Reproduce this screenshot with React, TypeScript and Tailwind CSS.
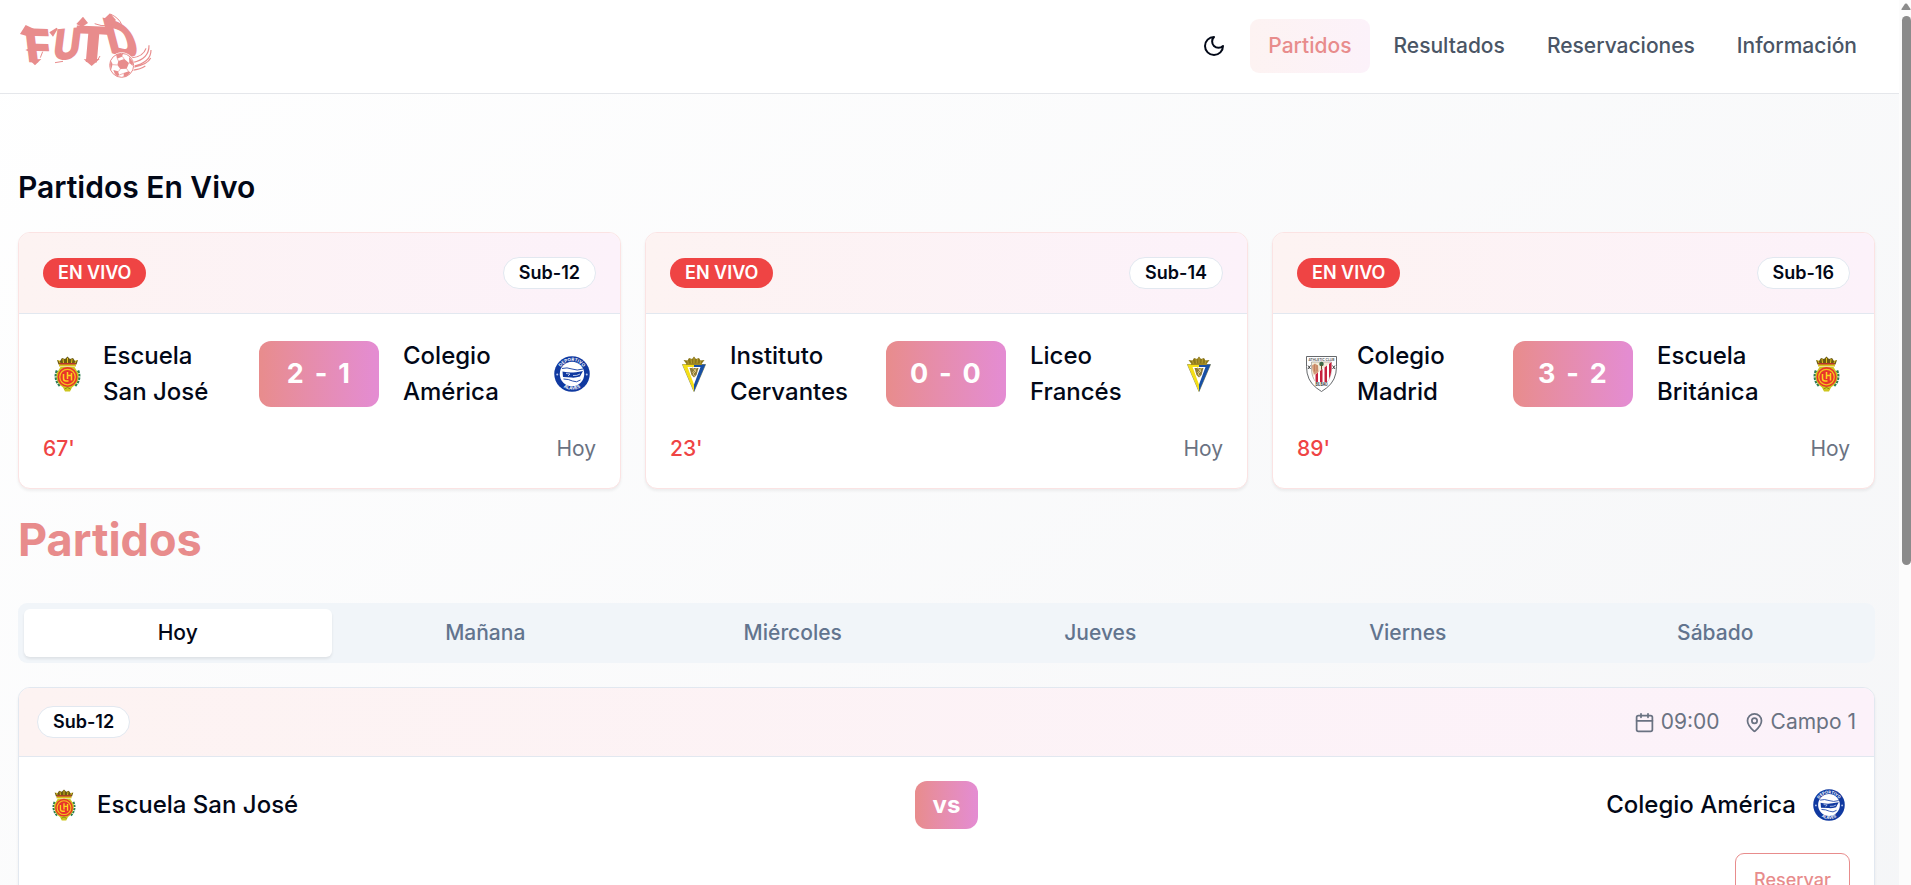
import React from "react";

type Crest = "mallorca" | "alaves" | "cadiz" | "athletic";

function MallorcaCrest({ className }: { className: string }) {
  return (
    <svg viewBox="0 0 54 72" className={className}>
      <path d="M9 17 6 8l6 2 4-6 6 2 5-5 5 5 6-2 4 6 6-2-3 9Z" fill="#6b5a12" />
      <path d="M9 8l3 6M18 6l1 8M27 4v10M36 6l-1 8M45 8l-3 6" stroke="#e0c21f" strokeWidth="2" />
      <rect x="11" y="14" width="32" height="4" fill="#b8342a" />
      <rect x="10" y="17" width="34" height="4" fill="#d8c21c" />
      <path d="M6 29q-7 17 6 31M48 29q7 17-6 31" fill="none" stroke="#2f7d54" strokeWidth="5" strokeDasharray="5 2" />
      <path d="M13 22h28l8 13q2 18-13 28l-4 8h-10l-4-8Q3 53 5 35Z" fill="#cdc61e" />
      <circle cx="27" cy="42" r="20" fill="#e8352b" />
      <circle cx="27" cy="42" r="15.5" fill="none" stroke="#f5c21b" strokeWidth="2.5" />
      <path d="M19 36v9q0 5 5 5h5M27 32v14M27 39h7M35 34v15" fill="none" stroke="#f9d51f" strokeWidth="3" />
      <path d="M21 66l6-3 6 3" fill="none" stroke="#8c8a17" strokeWidth="2" />
    </svg>
  );
}

function AlavesCrest({ className }: { className: string }) {
  return (
    <svg viewBox="0 0 72 72" className={className}>
      <defs>
        <path id="ring-top" d="M10 36a26 26 0 0 1 52 0" />
        <path id="ring-bottom" d="M4.500 36a31.500 31.500 0 0 0 63 0" />
      </defs>
      <circle cx="36" cy="36" r="35.5" fill="#1039a0" />
      <circle cx="36" cy="36" r="24.500" fill="#fff" />
      <path d="M17 31q9 2 17 2t24-3q-4 7-6 11-10 3-17 2t-17-1Z" fill="#1039a0" />
      <path d="M16 25q10-3 20 1t22 0M19 46q10 0 18 4t16-2" fill="none" stroke="#1039a0" strokeWidth="1.800" />
      <path d="M24 35l8 1-4 4M38 39q8 1 14-3" fill="none" stroke="#dfe7f8" strokeWidth="1.6" />
      <text fontSize="9" fontWeight="700" fill="#fff" className="font-['Inter',sans-serif]">
        <textPath href="#ring-top" startOffset="50%" textAnchor="middle">DEPORTIVO</textPath>
      </text>
      <text fontSize="9" fontWeight="700" fill="#fff" className="font-['Inter',sans-serif]">
        <textPath href="#ring-bottom" startOffset="50%" textAnchor="middle">ALAVÉS</textPath>
      </text>
      <circle cx="6.5" cy="37" r="2" fill="#b9c8ee" />
      <circle cx="65.5" cy="37" r="2" fill="#b9c8ee" />
    </svg>
  );
}

function CadizCrest({ className }: { className: string }) {
  return (
    <svg viewBox="0 0 48 72" className={className}>
      <path d="M9 16 3 8l8 1 3-5 6 2 4-5 4 5 6-2 3 5 8-1-6 8Z" fill="#8b7719" />
      <path d="M11 9l2 7M18 6l1 9M24 4v11M31 6l-1 9M38 9l-2 7" stroke="#c8ad38" strokeWidth="1.5" />
      <path d="M1 17h46L24 71Z" fill="#fff" stroke="#73713b" strokeWidth="1.5" />
      <path d="M1 17h23v5H11l13 35v14Z" fill="#f5df17" />
      <path d="M47 17H24v5h13L24 57v14Z" fill="#174fa4" />
      <path d="M15 24h18l-4 14-5 5-5-5Z" fill="#8d7b38" />
      <path d="M20 23l8 7-6 6 4 5M29 24l-8 10" fill="none" stroke="#d7c57e" strokeWidth="2" />
      <path d="M8 15h32v3H8Z" fill="#a28b23" />
    </svg>
  );
}

function AthleticCrest({ className }: { className: string }) {
  return (
    <svg viewBox="0 0 62 72" className={className}>
      <path d="M1 1h60v20q0 28-20 43l-10 7-10-7Q1 49 1 21Z" fill="#fff" stroke="#55585b" strokeWidth="1.8" />
      <text x="31" y="9" fontSize="8" fontWeight="600" textAnchor="middle" textLength="52" lengthAdjust="spacingAndGlyphs" fill="#55585b" className="font-['Inter',sans-serif]">ATHLETIC CLUB</text>
      <path d="M11 12h40v12q0 18-9 28H20Q11 42 11 26Z" fill="#f4edda" stroke="#7c7470" strokeWidth="1" />
      <path d="M12 19l6-4 6 4 1 14-9 4Q12 28 12 19Z" fill="#d49b78" />
      <path d="M17 17v14M22 18v12" stroke="#b87757" strokeWidth="1.5" />
      <circle cx="31" cy="16" r="4.5" fill="#3d6946" />
      <path d="M31 18v11" stroke="#6b512d" strokeWidth="2" />
      <path d="M51 12v15q-1 16-9 25H20q-4-6-5-12Z" fill="#fff" />
      <path d="M19 37l5-4v19h-4l-1-3ZM28 30l5-4v26h-5ZM37 23l5-4v33h-5ZM46 16l5-4v15q-1 11-5 19Z" fill="#c6203d" />
      <path d="M4 19l5 7M9 19l-5 7M53 19l5 7M58 19l-5 7" stroke="#333" strokeWidth="1.8" />
      <path d="M17 52h28l-6 8-8 6-8-6Z" fill="#fff" />
      <text x="31" y="60" fontSize="9" fontWeight="700" textAnchor="middle" textLength="24" lengthAdjust="spacingAndGlyphs" fill="#333" className="font-['Inter',sans-serif]">BILBAO</text>
    </svg>
  );
}

function TeamCrest({ crest, className }: { crest: Crest; className: string }) {
  if (crest === "mallorca") return <MallorcaCrest className={className} />;
  if (crest === "alaves") return <AlavesCrest className={className} />;
  if (crest === "cadiz") return <CadizCrest className={className} />;
  return <AthleticCrest className={className} />;
}

function Logo() {
  return (
    <svg viewBox="54 30 405 216" className="h-[72px] w-[135px] overflow-visible" fill="#e88c8c" aria-label="FUTD">
      <g className="font-['Inter',sans-serif]" fontWeight="900">
        <text fontSize="130" transform="matrix(1.02 .03 .13 1.08 82 187)">F</text>
        <text fontSize="118" transform="matrix(.96 -.08 -.14 1.1 155 182)">U</text>
        <text fontSize="130" transform="matrix(1.28 .06 -.1 1.14 217 184)">T</text>
        <text fontSize="130" transform="matrix(1.02 .3 .3 1.14 330 158)">D</text>
      </g>
      <path d="M60 102 77 75l24 11-13 24ZM148 97l22-14 3 4-14 23ZM76 150l16-7v14ZM88 179l17 17 19-19ZM229 72l20-22 15 19-18 12ZM311 58l19-18 18 20-14 16ZM251 178l24 20 24-21Z" />
      <path d="M128 155l-7 18M165 188l24-4M300 168l-7 12M284 71q20 8 37 6M333 43q25 12 32 31" fill="none" stroke="#e88c8c" strokeWidth="3" />
      <path d="M438 145q-8 25-44 29M447 136q1 41-49 52M453 150q0 38-55 49M452 174q-9 20-53 28M436 198q-14 10-40 13" fill="none" stroke="#fff" strokeWidth="7" />
      <path d="M438 145q-8 25-44 29M447 136q1 41-49 52M453 150q0 38-55 49M452 174q-9 20-53 28M436 198q-14 10-40 13" fill="none" stroke="#e88c8c" strokeWidth="3.5" />
      <circle cx="365" cy="196" r="39" fill="#fff" />
      <circle cx="365" cy="196" r="36" fill="#fff" stroke="#e88c8c" strokeWidth="3" />
      <path d="M355 183l18-6 14 12-7 17-19 1-9-12ZM348 163l21-2-3 9-15 6ZM387 170l12 16-1 12-10-10ZM332 181l6 12-5 18q-5-15-1-30ZM340 210l14 4 4 12-7 3q-8-6-11-19ZM371 219l15-5 5 3q-8 13-20 14Z" />
      <path d="M352 176l4 8M373 178l-6-9M387 189h6M380 206l6 9M361 207l-6 8M352 195l-14-1M358 225l13-5" stroke="#e88c8c" strokeWidth="2" />
    </svg>
  );
}

function MoonIcon() {
  return (
    <svg viewBox="0 0 24 24" className="size-6" fill="none" stroke="currentColor" strokeWidth="2" strokeLinecap="round" strokeLinejoin="round">
      <path d="M12 3a6 6 0 0 0 9 9 9 9 0 1 1-9-9Z" />
    </svg>
  );
}

function CalendarIcon() {
  return (
    <svg viewBox="0 0 24 24" className="size-[21px]" fill="none" stroke="currentColor" strokeWidth="2" strokeLinecap="round" strokeLinejoin="round">
      <path d="M8 2v4M16 2v4M3 10h18" />
      <rect width="18" height="18" x="3" y="4" rx="2" />
    </svg>
  );
}

function PinIcon() {
  return (
    <svg viewBox="0 0 24 24" className="size-[21px]" fill="none" stroke="currentColor" strokeWidth="2" strokeLinecap="round" strokeLinejoin="round">
      <path d="M20 10c0 4.993-5.539 10.193-7.399 11.799a1 1 0 0 1-1.202 0C9.539 20.193 4 14.993 4 10a8 8 0 0 1 16 0" />
      <circle cx="12" cy="10" r="3" />
    </svg>
  );
}

function CategoryBadge({ label }: { label: string }) {
  return (
    <span className="rounded-full border border-slate-200 bg-white px-[15px] py-[3px] text-[18px] leading-6 font-semibold">{label}</span>
  );
}

interface LiveMatch {
  category: string;
  home: string;
  away: string;
  homeCrest: Crest;
  awayCrest: Crest;
  score: string;
  minute: string;
}

const liveMatches: LiveMatch[] = [
  { category: "Sub-12", home: "Escuela San José", away: "Colegio América", homeCrest: "mallorca", awayCrest: "alaves", score: "2 - 1", minute: "67'" },
  { category: "Sub-14", home: "Instituto Cervantes", away: "Liceo Francés", homeCrest: "cadiz", awayCrest: "cadiz", score: "0 - 0", minute: "23'" },
  { category: "Sub-16", home: "Colegio Madrid", away: "Escuela Británica", homeCrest: "athletic", awayCrest: "mallorca", score: "3 - 2", minute: "89'" },
];

const days = ["Hoy", "Mañana", "Miércoles", "Jueves", "Viernes", "Sábado"];

function LiveCard({ match }: { match: LiveMatch }) {
  return (
    <article className="overflow-hidden rounded-xl border border-[#fbe3e3] bg-white shadow-[0_2px_3px_rgba(0,0,0,0.06)]">
      <div className="flex items-center justify-between border-b border-slate-200 bg-linear-to-r from-[#fdf3f2] to-[#fcf2fa] p-6">
        <span className="rounded-full bg-[#ef4444] px-[15px] py-[3px] text-[18px] leading-6 font-semibold text-white">EN VIVO</span>
        <CategoryBadge label={match.category} />
      </div>
      <div className="p-6">
        <div className="flex items-center gap-6">
          <div className="flex w-[192px] items-center gap-3">
            <div className="flex size-12 shrink-0 items-center justify-center">
              <TeamCrest crest={match.homeCrest} className="h-9 w-auto" />
            </div>
            <span className="flex-1 text-2xl leading-9 font-medium">{match.home}</span>
          </div>
          <div className="flex h-[66px] w-[120px] items-center justify-center rounded-xl bg-linear-to-r from-[#e88c8c] to-[#e48cd3] text-[27px] font-bold tracking-wider text-white [word-spacing:1.8px]">
            {match.score}
          </div>
          <div className="flex flex-1 items-center gap-3">
            <span className="flex-1 text-2xl leading-9 font-medium">{match.away}</span>
            <div className="flex size-12 shrink-0 items-center justify-center">
              <TeamCrest crest={match.awayCrest} className="h-9 w-auto" />
            </div>
          </div>
        </div>
        <div className="mt-6 flex items-center justify-between text-[21px] leading-[30px]">
          <span className="font-medium text-[#ef4444]">{match.minute}</span>
          <span className="text-gray-500">Hoy</span>
        </div>
      </div>
    </article>
  );
}

function NavLink({ label, active }: { label: string; active?: boolean }) {
  return (
    <a
      className={
        active
          ? "flex h-[54px] items-center rounded-[9px] bg-linear-to-r from-[#fdf3f2] to-[#fcf2fa] px-[18px] text-[#e88c8c]"
          : "flex h-[54px] items-center rounded-[9px] px-[18px] text-gray-600"
      }
    >
      {label}
    </a>
  );
}

export default function App() {
  return (
    <div className="flex h-[885px] overflow-hidden bg-[#fcfcfc] font-['Inter',sans-serif] text-[#020817]">
      <div className="h-[1375px] w-[1899px] shrink-0 bg-linear-to-br from-white to-gray-100">
        <header className="flex h-[94px] items-center justify-between border-b border-gray-200 bg-white pr-6 pb-px pl-[18px]">
          <Logo />
          <nav className="flex items-center gap-1.5 text-[21px] font-medium">
            <button className="mr-[3px] flex size-[54px] items-center justify-center" aria-label="Tema">
              <MoonIcon />
            </button>
            <NavLink label="Partidos" active />
            <NavLink label="Resultados" />
            <NavLink label="Reservaciones" />
            <NavLink label="Información" />
          </nav>
        </header>

        <main className="pt-[72px] pr-6 pl-[18px]">
          <h2 className="text-3xl leading-[42px] font-semibold">Partidos En Vivo</h2>
          <section className="mt-6 grid grid-cols-3 gap-6">
            {liveMatches.map((m) => (
              <LiveCard key={m.category} match={m} />
            ))}
          </section>

          <h1 className="mt-6 text-[45px] leading-[54px] font-bold text-[#e88c8c]">Partidos</h1>

          <div className="mt-9 grid h-[60px] grid-cols-6 rounded-[9px] bg-slate-100 p-1.5 text-[21px] font-medium">
            {days.map((day, i) => (
              <button
                key={day}
                className={
                  i === 0
                    ? "rounded-md bg-white shadow-[0_2px_3px_rgba(0,0,0,0.08)]"
                    : "rounded-md text-slate-500"
                }
              >
                {day}
              </button>
            ))}
          </div>

          <article className="mt-6 overflow-hidden rounded-xl border border-slate-200 bg-white shadow-[0_2px_3px_rgba(0,0,0,0.06)]">
            <div className="flex items-center justify-between border-b border-slate-200 bg-linear-to-r from-[#fdf3f2] to-[#fcf2fa] p-[18px]">
              <CategoryBadge label="Sub-12" />
              <div className="flex items-center gap-6 text-[21px] leading-[30px] text-gray-500">
                <span className="flex items-center gap-1.5">
                  <CalendarIcon />
                  09:00
                </span>
                <span className="flex items-center gap-1.5">
                  <PinIcon />
                  Campo 1
                </span>
              </div>
            </div>
            <div className="p-6">
              <div className="flex items-center">
                <div className="flex flex-1 items-center gap-3">
                  <div className="flex size-[42px] items-center justify-center">
                    <TeamCrest crest="mallorca" className="h-8 w-auto" />
                  </div>
                  <span className="text-2xl leading-9 font-medium">Escuela San José</span>
                </div>
                <span className="flex h-12 w-[63px] items-center justify-center rounded-xl bg-linear-to-r from-[#e88c8c] to-[#e48cd3] text-2xl font-bold text-white">vs</span>
                <div className="flex flex-1 items-center justify-end gap-3">
                  <span className="text-2xl leading-9 font-medium">Colegio América</span>
                  <div className="flex size-[42px] items-center justify-center">
                    <TeamCrest crest="alaves" className="h-8 w-auto" />
                  </div>
                </div>
              </div>
              <div className="mt-6 flex justify-end">
                <button className="h-[54px] rounded-[9px] border border-[#e88c8c] px-[18px] pb-0.5 text-[18px] font-medium text-[#e88c8c]">Reservar</button>
              </div>
            </div>
          </article>
        </main>
      </div>

      <div className="flex w-3 flex-col items-end pt-[3px]">
        <svg viewBox="0 0 10 7" className="h-[7px] w-[10px]" fill="#8b8b8b">
          <path d="M4 .8Q5 0 6 .8L9.5 6Q10 7 9 7H1Q0 7 .5 6Z" />
        </svg>
        <div className="mt-1.5 h-[549px] w-[9px] rounded-full bg-[#8b8b8b]" />
      </div>
    </div>
  );
}
